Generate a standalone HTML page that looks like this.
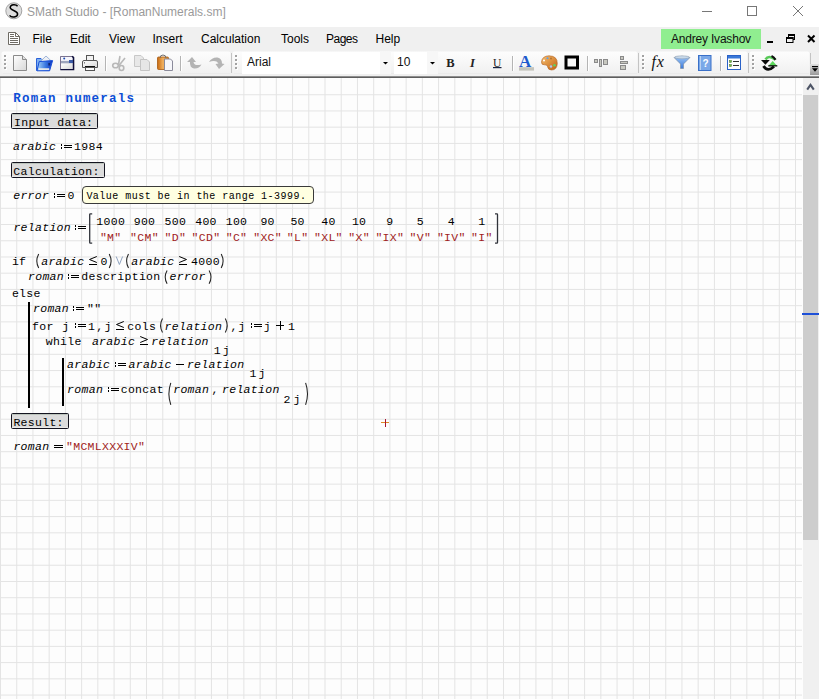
<!DOCTYPE html>
<html><head><meta charset="utf-8"><style>
html,body{margin:0;padding:0;width:819px;height:699px;overflow:hidden;background:#fff;}
body{position:relative;font-family:"Liberation Sans",sans-serif;}
.abs{position:absolute;}
#title{left:27px;top:5px;font-size:12px;color:#9A9A9A;white-space:nowrap;}
.mi_{position:absolute;top:32px;font-size:12px;color:#000;white-space:nowrap;}
svg text{font-family:"Liberation Mono",monospace;}
.m{font-size:11.5px;letter-spacing:0.3px;fill:#000;}
.mi{font-size:11.5px;letter-spacing:0.3px;font-style:italic;fill:#000;}
.title{font-size:12.5px;letter-spacing:1.2px;font-weight:bold;fill:#0C4ED6;}
.lbl{font-size:11.5px;letter-spacing:0.3px;fill:#000;}
.tip{font-size:10px;letter-spacing:0.47px;fill:#000;}
.str{font-size:11.5px;letter-spacing:0.3px;fill:#A01C22;}
.str2{font-size:11.5px;letter-spacing:0.3px;fill:#000;}
</style></head><body>
<div class="abs" style="left:0;top:0;width:819px;height:27px;background:#fff"></div>
<svg class="abs" style="left:0;top:0" width="819" height="27">
<circle cx="13.8" cy="10.8" r="8" fill="#DEDEDE" stroke="#9A9A9A" stroke-width="0.9"/>
<path d="M17.6 6.3 C16.2 4.3 10.6 4.0 10.2 7.4 C9.8 10.6 17.6 10.4 17.6 13.9 C17.6 17.6 11.2 17.8 9.6 15.4" fill="none" stroke="#000" stroke-width="1.5"/>
<rect x="702" y="11" width="10" height="1" fill="#777"/>
<rect x="747.5" y="6.5" width="9" height="9" fill="none" stroke="#777"/>
<path d="M793 6 L803 16 M803 6 L793 16" stroke="#777" stroke-width="1"/>
</svg>
<div class="abs" id="title">SMath Studio - [RomanNumerals.sm]</div>
<div class="abs" style="left:0;top:27px;width:819px;height:23px;background:#F0F0F0"></div>
<div class="mi_" style="left:32.5px">File</div>
<div class="mi_" style="left:70px">Edit</div>
<div class="mi_" style="left:109px">View</div>
<div class="mi_" style="left:152.5px">Insert</div>
<div class="mi_" style="left:201px">Calculation</div>
<div class="mi_" style="left:281px">Tools</div>
<div class="mi_" style="left:326px;letter-spacing:-0.5px">Pages</div>
<div class="mi_" style="left:375.5px">Help</div>
<svg class="abs" style="left:0;top:27px" width="819" height="23">
<path d="M8.5 5.5 H15.5 L19.5 9.5 V17.5 H8.5 Z" fill="#FFF" stroke="#6E6B64"/>
<path d="M15.5 5.5 V9.5 H19.5" fill="none" stroke="#6E6B64"/>
<rect x="10" y="7" width="4" height="1" fill="#6E6B64"/><rect x="10" y="9" width="4" height="1" fill="#6E6B64"/>
<rect x="10" y="11" width="8" height="1" fill="#6E6B64"/><rect x="10" y="13" width="8" height="1" fill="#6E6B64"/><rect x="10" y="15" width="8" height="1" fill="#6E6B64"/>
<rect x="767" y="14" width="6" height="2" fill="#000"/>
<rect x="788.5" y="7.5" width="6" height="5" fill="none" stroke="#000"/><rect x="788" y="7" width="7" height="2" fill="#000"/>
<rect x="786.5" y="10.5" width="6.5" height="5" fill="#F0F0F0" stroke="#000"/><rect x="786" y="10" width="7.5" height="2" fill="#000"/>
<path d="M808 8.5 L814.5 15 M814.5 8.5 L808 15" stroke="#000" stroke-width="2"/>
</svg>
<div class="abs" style="left:661px;top:29px;width:100px;height:20px;background:#90EE90;"></div>
<div class="abs" style="left:671px;top:32px;font-size:12px;color:#111;white-space:nowrap;letter-spacing:-0.2px">Andrey Ivashov</div>
<div class="abs" style="left:0;top:50px;width:819px;height:26px;background:#F0F0F0"></div>
<svg class="abs" style="left:0;top:0" width="819" height="78"><defs>
<linearGradient id="tbg" x1="0" y1="0" x2="0" y2="1"><stop offset="0" stop-color="#FDFDFD"/><stop offset="1" stop-color="#F1F1F1"/></linearGradient>
<linearGradient id="pg" x1="0" y1="0" x2="1" y2="1"><stop offset="0" stop-color="#FFFFFF"/><stop offset="1" stop-color="#D8D8D8"/></linearGradient>
<linearGradient id="fold" x1="0" y1="0" x2="0" y2="1"><stop offset="0" stop-color="#6FA8F0"/><stop offset="1" stop-color="#0A3FD0"/></linearGradient>
<linearGradient id="ovf" x1="0" y1="0" x2="0" y2="1"><stop offset="0" stop-color="#E0E0E0"/><stop offset="1" stop-color="#9A9A9A"/></linearGradient>
<linearGradient id="org" x1="0" y1="0" x2="1" y2="0"><stop offset="0" stop-color="#C86A10"/><stop offset=".5" stop-color="#F0B060"/><stop offset="1" stop-color="#D88020"/></linearGradient>
<linearGradient id="pal" x1="0" y1="0" x2="1" y2="1"><stop offset="0" stop-color="#F8C070"/><stop offset="1" stop-color="#C06010"/></linearGradient>
<linearGradient id="fun" x1="0" y1="0" x2="0" y2="1"><stop offset="0" stop-color="#A0C8F8"/><stop offset="1" stop-color="#3A78D8"/></linearGradient>
</defs>
<rect x="1.5" y="51.5" width="229" height="22" rx="2" fill="url(#tbg)"/>
<rect x="231" y="53" width="1" height="20" fill="#C4C4C4"/>
<rect x="3" y="73" width="227" height="1" fill="#EBEBEB"/>
<rect x="232.5" y="51.5" width="405" height="22" rx="2" fill="url(#tbg)"/>
<rect x="638" y="53" width="1" height="20" fill="#C4C4C4"/>
<rect x="234" y="73" width="403" height="1" fill="#EBEBEB"/>
<rect x="639.5" y="51.5" width="108" height="22" rx="2" fill="url(#tbg)"/>
<rect x="748" y="53" width="1" height="20" fill="#C4C4C4"/>
<rect x="641" y="73" width="106" height="1" fill="#EBEBEB"/>
<rect x="749.5" y="51.5" width="60" height="22" rx="2" fill="url(#tbg)"/>
<rect x="810" y="53" width="1" height="20" fill="#C4C4C4"/>
<rect x="751" y="73" width="58" height="1" fill="#EBEBEB"/>
<rect x="5" y="56" width="2" height="2" fill="#FFFFFF"/>
<rect x="4" y="55" width="2" height="2" fill="#A2A2A2"/>
<rect x="5" y="60" width="2" height="2" fill="#FFFFFF"/>
<rect x="4" y="59" width="2" height="2" fill="#A2A2A2"/>
<rect x="5" y="64" width="2" height="2" fill="#FFFFFF"/>
<rect x="4" y="63" width="2" height="2" fill="#A2A2A2"/>
<rect x="5" y="68" width="2" height="2" fill="#FFFFFF"/>
<rect x="4" y="67" width="2" height="2" fill="#A2A2A2"/>
<rect x="236" y="56" width="2" height="2" fill="#FFFFFF"/>
<rect x="235" y="55" width="2" height="2" fill="#A2A2A2"/>
<rect x="236" y="60" width="2" height="2" fill="#FFFFFF"/>
<rect x="235" y="59" width="2" height="2" fill="#A2A2A2"/>
<rect x="236" y="64" width="2" height="2" fill="#FFFFFF"/>
<rect x="235" y="63" width="2" height="2" fill="#A2A2A2"/>
<rect x="236" y="68" width="2" height="2" fill="#FFFFFF"/>
<rect x="235" y="67" width="2" height="2" fill="#A2A2A2"/>
<rect x="643" y="56" width="2" height="2" fill="#FFFFFF"/>
<rect x="642" y="55" width="2" height="2" fill="#A2A2A2"/>
<rect x="643" y="60" width="2" height="2" fill="#FFFFFF"/>
<rect x="642" y="59" width="2" height="2" fill="#A2A2A2"/>
<rect x="643" y="64" width="2" height="2" fill="#FFFFFF"/>
<rect x="642" y="63" width="2" height="2" fill="#A2A2A2"/>
<rect x="643" y="68" width="2" height="2" fill="#FFFFFF"/>
<rect x="642" y="67" width="2" height="2" fill="#A2A2A2"/>
<rect x="753" y="56" width="2" height="2" fill="#FFFFFF"/>
<rect x="752" y="55" width="2" height="2" fill="#A2A2A2"/>
<rect x="753" y="60" width="2" height="2" fill="#FFFFFF"/>
<rect x="752" y="59" width="2" height="2" fill="#A2A2A2"/>
<rect x="753" y="64" width="2" height="2" fill="#FFFFFF"/>
<rect x="752" y="63" width="2" height="2" fill="#A2A2A2"/>
<rect x="753" y="68" width="2" height="2" fill="#FFFFFF"/>
<rect x="752" y="67" width="2" height="2" fill="#A2A2A2"/>
<rect x="105" y="56" width="1" height="15" fill="#B4B4B4"/>
<rect x="106" y="56" width="1" height="15" fill="#FFFFFF"/>
<rect x="180" y="56" width="1" height="15" fill="#B4B4B4"/>
<rect x="181" y="56" width="1" height="15" fill="#FFFFFF"/>
<rect x="512" y="56" width="1" height="15" fill="#B4B4B4"/>
<rect x="513" y="56" width="1" height="15" fill="#FFFFFF"/>
<rect x="587" y="56" width="1" height="15" fill="#B4B4B4"/>
<rect x="588" y="56" width="1" height="15" fill="#FFFFFF"/>
<rect x="720" y="56" width="1" height="15" fill="#B4B4B4"/>
<rect x="721" y="56" width="1" height="15" fill="#FFFFFF"/>
<path d="M13.5 55.5 H22.5 L26.5 59.5 V70.5 H13.5 Z" fill="url(#pg)" stroke="#8A8A8A"/>
<path d="M22.5 55.5 V59.5 H26.5" fill="#E0E0E0" stroke="#8A8A8A"/>
<linearGradient id="fold2" x1="0" y1="0" x2="1" y2="0"><stop offset="0" stop-color="#A8D4FA"/><stop offset=".55" stop-color="#3A78E0"/><stop offset="1" stop-color="#0A30C0"/></linearGradient>
<path d="M36.5 70.5 V58.5 H41 L42 59.5 H44.5 L39.5 62 L37.8 70.5 Z" fill="#7EB0F0" stroke="#2A60D8" stroke-width="1"/>
<path d="M40 61.8 L46 56 L51.5 61.2 Z" fill="#EEF0F4" stroke="#8AA4D0" stroke-width=".8"/>
<path d="M37 70.8 L39.2 61.6 L52.6 60.6 L49.6 70.8 Z" fill="url(#fold2)" stroke="#1A50D8" stroke-width="1"/>
<rect x="38.6" y="68.3" width="10.6" height="1.6" fill="#F6F2EA"/>
<rect x="48.5" y="63" width="1.2" height="2.5" fill="#0A1A50"/>
<rect x="60" y="56" width="14" height="14" fill="#C4C4D0"/>
<rect x="61" y="57" width="11" height="3.8" fill="#F6F6FC"/>
<circle cx="64.2" cy="58.4" r="1" fill="#1F4DB0"/>
<rect x="61" y="61" width="12" height="2.2" fill="#9CA4BC"/>
<rect x="69" y="60" width="4" height="3" fill="#3A5AA8"/>
<rect x="61" y="63.5" width="11" height="5.8" fill="url(#pg)"/>
<path d="M60.5 69.5 V56.5 H72" fill="none" stroke="#7C7490" stroke-width="1"/>
<path d="M72 56.3 L73.6 57.6 V69.6 H60.4" fill="none" stroke="#0E0E3A" stroke-width="1.4"/>
<rect x="86.5" y="55.5" width="7" height="5" fill="#F2F2F2" stroke="#555"/>
<path d="M84 60.5 H96 Q97.5 60.5 97.5 62 V67.5 H82.5 V62 Q82.5 60.5 84 60.5 Z" fill="url(#pg)" stroke="#555"/>
<rect x="85" y="66" width="10" height="1.6" fill="#111"/>
<rect x="85.5" y="67.5" width="9" height="3" fill="#FAFAFA" stroke="#555"/>
<circle cx="84.5" cy="62.8" r=".6" fill="#333"/>
<g fill="none" stroke="#B8B8B8" stroke-width="1.6"><ellipse cx="115.5" cy="65.5" rx="2.8" ry="2.3"/><ellipse cx="121.5" cy="68" rx="2.3" ry="2.5"/><path d="M118.5 64.5 L120 56"/><path d="M119 65.5 L125 58"/></g>
<path d="M134.5 55.5 H141 L143.5 58 V66.5 H134.5 Z" fill="#E8E8E8" stroke="#C8C8C8"/>
<path d="M140.5 59.5 H147 L149.5 62 V70.5 H140.5 Z" fill="#E6E6E6" stroke="#C4C4C4"/>
<rect x="157.5" y="57" width="11" height="12.5" rx="1" fill="url(#org)" stroke="#A85A10" stroke-width=".8"/>
<path d="M160 58 Q160 55 163 55 Q166 55 166 58" fill="none" stroke="#707070" stroke-width="1"/>
<path d="M164.5 59 H170.5 L172.5 61 V70.5 H164.5 Z" fill="#F6F6FA" stroke="#8A8A9A"/>
<path d="M187 62 L192 57 L196 62 L193.5 62 Q194 66.5 201.5 64.5 Q199 69 194 68.5 Q189.5 67.5 190 62 Z" fill="#B4B4B4"/>
<path d="M224.5 64 L219 69 L215.5 64 L218.5 63.5 Q216 59.5 209 62 Q212 57 217.5 57.5 Q222 58.5 222 63.5 Z" fill="#B4B4B4"/>
<rect x="242" y="52" width="149" height="22" fill="#FFFFFF"/>
<rect x="380" y="52" width="11" height="22" fill="#F7F7F7"/>
<path d="M383 62 H388 L385.5 64.5 Z" fill="#000"/>
<rect x="394" y="52" width="44" height="22" fill="#FFFFFF"/>
<rect x="427" y="52" width="11" height="22" fill="#F7F7F7"/>
<path d="M430 62 H435 L432.5 64.5 Z" fill="#000"/>
<text x="247" y="65.7" style="font-family:'Liberation Sans';font-size:12px" fill="#111">Arial</text>
<text x="397" y="65.7" style="font-family:'Liberation Sans';font-size:12px" fill="#111">10</text>
<text x="446.2" y="67.3" style="font-family:'Liberation Serif';font-weight:bold;font-size:12.5px" fill="#222">B</text>
<text x="470" y="67.3" style="font-family:'Liberation Serif';font-style:italic;font-weight:bold;font-size:12.5px" fill="#222">I</text>
<text x="493" y="66.5" style="font-family:'Liberation Serif';font-size:11.5px" fill="#222">U</text>
<rect x="493" y="67" width="8.5" height="1.2" fill="#1A2440"/>
<text x="519" y="66.8" style="font-family:'Liberation Serif';font-weight:bold;font-size:17px" fill="#1E5ACD">A</text>
<rect x="519" y="67.2" width="15" height="3.4" fill="#C4C4BC"/>
<path d="M541.5 62 Q542 56 549 55.8 Q557.5 56 557.3 63.5 Q557 70 551.5 70 Q548 70 547.5 66.5 Q547 64.5 544.5 64.8 Q541.3 65 541.5 62 Z" fill="url(#pal)" stroke="#B06020" stroke-width=".6"/>
<circle cx="544" cy="60.5" r="1" fill="#FFF"/><circle cx="547.5" cy="58.2" r="1" fill="#5AA0F0"/><circle cx="551" cy="58.5" r=".9" fill="#B07030"/><circle cx="551" cy="66.5" r="1.2" fill="#A8C8F8"/><circle cx="554.5" cy="65.3" r="1.3" fill="#60D060"/>
<rect x="566" y="57" width="11.5" height="11" fill="#F8F8F8" stroke="#000" stroke-width="3"/>
<g fill="#C8C8C0" stroke="#8A8A8A" stroke-width="1"><rect x="594.5" y="59.5" width="3" height="3"/><rect x="599.5" y="59.5" width="2" height="7"/><rect x="603.5" y="59.5" width="4" height="5"/></g>
<g fill="#C8C8C0" stroke="#8A8A8A" stroke-width="1"><rect x="620.5" y="56.5" width="3" height="3"/><rect x="620.5" y="61.5" width="7" height="2"/><rect x="620.5" y="65.5" width="5" height="4"/></g>
<text x="651.5" y="67" style="font-family:'Liberation Serif';font-style:italic;font-size:16px;letter-spacing:0.8px" fill="#111">fx</text>
<path d="M674 57.5 Q682 55 690 57.5 L683.5 64 V68.5 H680.5 V64 Z" fill="url(#fun)" stroke="#7A8A9A" stroke-width=".6"/>
<ellipse cx="682" cy="57.3" rx="7.5" ry="1.5" fill="#C8D8E8" stroke="#8A9AAA" stroke-width=".5"/>
<rect x="698.5" y="55.5" width="12.5" height="15" fill="#7AA8E8" stroke="#3A70C8"/>
<rect x="700" y="56" width="1" height="14" fill="#B8D0F0"/>
<text x="702.5" y="67" style="font-family:'Liberation Sans';font-weight:bold;font-size:10px" fill="#FFF">?</text>
<rect x="727.5" y="55.5" width="13" height="14" fill="#FFFFFF" stroke="#2A62C8"/>
<rect x="728" y="56" width="12" height="2.5" fill="#3A78D8"/>
<rect x="729.5" y="60.5" width="2" height="2" fill="#70C040" stroke="#507030" stroke-width=".5"/>
<rect x="729.5" y="64.5" width="2" height="2" fill="#70C040" stroke="#507030" stroke-width=".5"/>
<rect x="733" y="61" width="6" height="1" fill="#333"/><rect x="733" y="65" width="6" height="1" fill="#333"/>
<path d="M765.5 59.5 Q768.5 54.5 775.5 59.8" fill="none" stroke="#58C858" stroke-width="2.6"/>
<path d="M771.5 56 Q774 57 775.5 59.8" fill="none" stroke="#111" stroke-width="2.2"/>
<path d="M761 60 H769.8 L765.4 64.8 Z" fill="#0A0A0A"/>
<path d="M763.5 66 Q767.5 72.5 774 66.5" fill="none" stroke="#0A0A0A" stroke-width="2.8"/>
<path d="M768.3 66 H777.2 L772.7 61 Z" fill="#5CD85C"/>
<rect x="768.3" y="65.2" width="9" height="1.3" fill="#0A0A0A"/>
<rect x="810" y="64" width="9" height="11" fill="url(#ovf)"/>
<rect x="812" y="66" width="6" height="1.2" fill="#000"/>
<path d="M812 68.2 H818 L815 71.8 Z" fill="#000"/></svg>
<div class="abs" style="left:0;top:76px;width:819px;height:1px;background:#8E8E8E"></div><div class="abs" style="left:0;top:77px;width:819px;height:1px;background:#5E5E5E"></div>
<svg class="abs" style="left:0;top:0" width="819" height="699">
<rect x="0" y="78" width="803" height="621" fill="#FDFDFD"/>
<rect x="0.0" y="78" width="1" height="621" fill="#E4E4E4"/>
<rect x="16.225" y="78" width="1" height="621" fill="#E4E4E4"/>
<rect x="32.45" y="78" width="1" height="621" fill="#E4E4E4"/>
<rect x="48.675" y="78" width="1" height="621" fill="#E4E4E4"/>
<rect x="64.9" y="78" width="1" height="621" fill="#E4E4E4"/>
<rect x="81.125" y="78" width="1" height="621" fill="#E4E4E4"/>
<rect x="97.35" y="78" width="1" height="621" fill="#E4E4E4"/>
<rect x="113.575" y="78" width="1" height="621" fill="#E4E4E4"/>
<rect x="129.8" y="78" width="1" height="621" fill="#E4E4E4"/>
<rect x="146.025" y="78" width="1" height="621" fill="#E4E4E4"/>
<rect x="162.25" y="78" width="1" height="621" fill="#E4E4E4"/>
<rect x="178.475" y="78" width="1" height="621" fill="#E4E4E4"/>
<rect x="194.7" y="78" width="1" height="621" fill="#E4E4E4"/>
<rect x="210.925" y="78" width="1" height="621" fill="#E4E4E4"/>
<rect x="227.15" y="78" width="1" height="621" fill="#E4E4E4"/>
<rect x="243.375" y="78" width="1" height="621" fill="#E4E4E4"/>
<rect x="259.6" y="78" width="1" height="621" fill="#E4E4E4"/>
<rect x="275.825" y="78" width="1" height="621" fill="#E4E4E4"/>
<rect x="292.05" y="78" width="1" height="621" fill="#E4E4E4"/>
<rect x="308.275" y="78" width="1" height="621" fill="#E4E4E4"/>
<rect x="324.5" y="78" width="1" height="621" fill="#E4E4E4"/>
<rect x="340.725" y="78" width="1" height="621" fill="#E4E4E4"/>
<rect x="356.95" y="78" width="1" height="621" fill="#E4E4E4"/>
<rect x="373.175" y="78" width="1" height="621" fill="#E4E4E4"/>
<rect x="389.4" y="78" width="1" height="621" fill="#E4E4E4"/>
<rect x="405.625" y="78" width="1" height="621" fill="#E4E4E4"/>
<rect x="421.85" y="78" width="1" height="621" fill="#E4E4E4"/>
<rect x="438.075" y="78" width="1" height="621" fill="#E4E4E4"/>
<rect x="454.3" y="78" width="1" height="621" fill="#E4E4E4"/>
<rect x="470.525" y="78" width="1" height="621" fill="#E4E4E4"/>
<rect x="486.75" y="78" width="1" height="621" fill="#E4E4E4"/>
<rect x="502.975" y="78" width="1" height="621" fill="#E4E4E4"/>
<rect x="519.2" y="78" width="1" height="621" fill="#E4E4E4"/>
<rect x="535.425" y="78" width="1" height="621" fill="#E4E4E4"/>
<rect x="551.65" y="78" width="1" height="621" fill="#E4E4E4"/>
<rect x="567.875" y="78" width="1" height="621" fill="#E4E4E4"/>
<rect x="584.1" y="78" width="1" height="621" fill="#E4E4E4"/>
<rect x="600.325" y="78" width="1" height="621" fill="#E4E4E4"/>
<rect x="616.55" y="78" width="1" height="621" fill="#E4E4E4"/>
<rect x="632.775" y="78" width="1" height="621" fill="#E4E4E4"/>
<rect x="649.0" y="78" width="1" height="621" fill="#E4E4E4"/>
<rect x="665.225" y="78" width="1" height="621" fill="#E4E4E4"/>
<rect x="681.45" y="78" width="1" height="621" fill="#E4E4E4"/>
<rect x="697.675" y="78" width="1" height="621" fill="#E4E4E4"/>
<rect x="713.9" y="78" width="1" height="621" fill="#E4E4E4"/>
<rect x="730.125" y="78" width="1" height="621" fill="#E4E4E4"/>
<rect x="746.35" y="78" width="1" height="621" fill="#E4E4E4"/>
<rect x="762.575" y="78" width="1" height="621" fill="#E4E4E4"/>
<rect x="778.8" y="78" width="1" height="621" fill="#E4E4E4"/>
<rect x="795.025" y="78" width="1" height="621" fill="#E4E4E4"/>
<rect x="0" y="94.225" width="802" height="1" fill="#E4E4E4"/>
<rect x="0" y="110.45" width="802" height="1" fill="#E4E4E4"/>
<rect x="0" y="126.675" width="802" height="1" fill="#E4E4E4"/>
<rect x="0" y="142.9" width="802" height="1" fill="#E4E4E4"/>
<rect x="0" y="159.125" width="802" height="1" fill="#E4E4E4"/>
<rect x="0" y="175.35" width="802" height="1" fill="#E4E4E4"/>
<rect x="0" y="191.575" width="802" height="1" fill="#E4E4E4"/>
<rect x="0" y="207.8" width="802" height="1" fill="#E4E4E4"/>
<rect x="0" y="224.025" width="802" height="1" fill="#E4E4E4"/>
<rect x="0" y="240.25" width="802" height="1" fill="#E4E4E4"/>
<rect x="0" y="256.475" width="802" height="1" fill="#E4E4E4"/>
<rect x="0" y="272.7" width="802" height="1" fill="#E4E4E4"/>
<rect x="0" y="288.925" width="802" height="1" fill="#E4E4E4"/>
<rect x="0" y="305.15" width="802" height="1" fill="#E4E4E4"/>
<rect x="0" y="321.375" width="802" height="1" fill="#E4E4E4"/>
<rect x="0" y="337.6" width="802" height="1" fill="#E4E4E4"/>
<rect x="0" y="353.825" width="802" height="1" fill="#E4E4E4"/>
<rect x="0" y="370.05" width="802" height="1" fill="#E4E4E4"/>
<rect x="0" y="386.275" width="802" height="1" fill="#E4E4E4"/>
<rect x="0" y="402.5" width="802" height="1" fill="#E4E4E4"/>
<rect x="0" y="418.725" width="802" height="1" fill="#E4E4E4"/>
<rect x="0" y="434.95" width="802" height="1" fill="#E4E4E4"/>
<rect x="0" y="451.175" width="802" height="1" fill="#E4E4E4"/>
<rect x="0" y="467.4" width="802" height="1" fill="#E4E4E4"/>
<rect x="0" y="483.625" width="802" height="1" fill="#E4E4E4"/>
<rect x="0" y="499.85" width="802" height="1" fill="#E4E4E4"/>
<rect x="0" y="516.075" width="802" height="1" fill="#E4E4E4"/>
<rect x="0" y="532.3" width="802" height="1" fill="#E4E4E4"/>
<rect x="0" y="548.525" width="802" height="1" fill="#E4E4E4"/>
<rect x="0" y="564.75" width="802" height="1" fill="#E4E4E4"/>
<rect x="0" y="580.975" width="802" height="1" fill="#E4E4E4"/>
<rect x="0" y="597.2" width="802" height="1" fill="#E4E4E4"/>
<rect x="0" y="613.425" width="802" height="1" fill="#E4E4E4"/>
<rect x="0" y="629.65" width="802" height="1" fill="#E4E4E4"/>
<rect x="0" y="645.875" width="802" height="1" fill="#E4E4E4"/>
<rect x="0" y="662.1" width="802" height="1" fill="#E4E4E4"/>
<rect x="0" y="678.325" width="802" height="1" fill="#E4E4E4"/>
<rect x="0" y="694.55" width="802" height="1" fill="#E4E4E4"/>
<rect x="803" y="78" width="16" height="621" fill="#F0F0F0"/>
<rect x="803" y="95" width="15" height="445" fill="#CDCDCD"/>
<rect x="802" y="313" width="17" height="2" fill="#1E50D8"/>
<path d="M807.2 89.6 L810.5 84.8 L813.8 89.6" fill="none" stroke="#4E5566" stroke-width="2.1"/>
<text x="13.3" y="101.6" class="title" >Roman numerals</text>
<rect x="11.5" y="113.5" width="86" height="15" rx="1" fill="#DCDCDC" stroke="#141420" stroke-width="1"/>
<rect x="12" y="114" width="85" height="1" fill="#BCC4BC"/>
<rect x="12" y="127" width="85" height="1" fill="#E8E8E8"/>
<text x="14.1" y="126" class="lbl" >Input data:</text>
<text x="13.1" y="150" class="mi" >arabic</text>
<rect x="61" y="144" width="1" height="2" fill="#000"/>
<rect x="61" y="147" width="1" height="2" fill="#000"/>
<rect x="64" y="145" width="8" height="1" fill="#000"/>
<rect x="64" y="147" width="8" height="1" fill="#000"/>
<text x="74.1" y="150" class="m" >1984</text>
<rect x="11.5" y="162.5" width="93" height="15" rx="1" fill="#DCDCDC" stroke="#141420" stroke-width="1"/>
<rect x="12" y="163" width="92" height="1" fill="#BCC4BC"/>
<rect x="12" y="176" width="92" height="1" fill="#E8E8E8"/>
<text x="13.299999999999999" y="175" class="lbl" >Calculation:</text>
<text x="13.2" y="199" class="mi" >error</text>
<rect x="54" y="193" width="1" height="2" fill="#000"/>
<rect x="54" y="196" width="1" height="2" fill="#000"/>
<rect x="57" y="194" width="8" height="1" fill="#000"/>
<rect x="57" y="196" width="8" height="1" fill="#000"/>
<text x="67.5" y="199" class="m" >0</text>
<rect x="82.5" y="186.5" width="231" height="17" rx="3.5" fill="#FFFFE1" stroke="#3A3A3A" stroke-width="1"/>
<text x="86.4" y="198.8" class="tip" >Value must be in the range 1-3999.</text>
<text x="13.4" y="231.4" class="mi" >relation</text>
<rect x="75" y="225" width="1" height="2" fill="#000"/>
<rect x="75" y="228" width="1" height="2" fill="#000"/>
<rect x="78" y="226" width="8" height="1" fill="#000"/>
<rect x="78" y="228" width="8" height="1" fill="#000"/>
<path d="M92.2 213.8 H90.3 Q89.7 213.8 89.7 214.5 V242.5 Q89.7 243.2 90.3 243.2 H92.2" fill="none" stroke="#30333A" stroke-width="1.3"/>
<path d="M495 213.8 H496.9 Q497.5 213.8 497.5 214.5 V242.5 Q497.5 243.2 496.9 243.2 H495" fill="none" stroke="#30333A" stroke-width="1.3"/>
<text x="110.7" y="224.8" class="m" text-anchor="middle">1000</text>
<text x="110.7" y="241.4" class="str" text-anchor="middle">&quot;M&quot;</text>
<text x="144.5" y="224.8" class="m" text-anchor="middle">900</text>
<text x="144.5" y="241.4" class="str" text-anchor="middle">&quot;CM&quot;</text>
<text x="175.4" y="224.8" class="m" text-anchor="middle">500</text>
<text x="175.4" y="241.4" class="str" text-anchor="middle">&quot;D&quot;</text>
<text x="206.0" y="224.8" class="m" text-anchor="middle">400</text>
<text x="206.0" y="241.4" class="str" text-anchor="middle">&quot;CD&quot;</text>
<text x="236.5" y="224.8" class="m" text-anchor="middle">100</text>
<text x="236.5" y="241.4" class="str" text-anchor="middle">&quot;C&quot;</text>
<text x="267.6" y="224.8" class="m" text-anchor="middle">90</text>
<text x="267.6" y="241.4" class="str" text-anchor="middle">&quot;XC&quot;</text>
<text x="297.6" y="224.8" class="m" text-anchor="middle">50</text>
<text x="297.6" y="241.4" class="str" text-anchor="middle">&quot;L&quot;</text>
<text x="328.40000000000003" y="224.8" class="m" text-anchor="middle">40</text>
<text x="328.40000000000003" y="241.4" class="str" text-anchor="middle">&quot;XL&quot;</text>
<text x="359.1" y="224.8" class="m" text-anchor="middle">10</text>
<text x="359.1" y="241.4" class="str" text-anchor="middle">&quot;X&quot;</text>
<text x="389.8" y="224.8" class="m" text-anchor="middle">9</text>
<text x="389.8" y="241.4" class="str" text-anchor="middle">&quot;IX&quot;</text>
<text x="420.40000000000003" y="224.8" class="m" text-anchor="middle">5</text>
<text x="420.40000000000003" y="241.4" class="str" text-anchor="middle">&quot;V&quot;</text>
<text x="451.3" y="224.8" class="m" text-anchor="middle">4</text>
<text x="451.3" y="241.4" class="str" text-anchor="middle">&quot;IV&quot;</text>
<text x="481.8" y="224.8" class="m" text-anchor="middle">1</text>
<text x="481.8" y="241.4" class="str" text-anchor="middle">&quot;I&quot;</text>
<text x="11.9" y="265" class="m" >if</text>
<path d="M38.699999999999996 254 Q34.9 261.0 38.699999999999996 268" fill="none" stroke="#222" stroke-width="1.05"/>
<text x="41.2" y="265" class="mi" >arabic</text>
<path d="M96.8 256.5 L89.5 259.5 L96.8 262.5" fill="none" stroke="#000" stroke-width="1"/>
<rect x="89" y="264" width="8" height="1" fill="#000"/>
<text x="100.39999999999999" y="265" class="m" >0</text>
<path d="M109.2 254 Q113.0 261.0 109.2 268" fill="none" stroke="#222" stroke-width="1.05"/>
<path d="M116.2 256.5 L119.4 264.5 L122.60000000000001 256.5" fill="none" stroke="#90A4C0" stroke-width="1"/>
<path d="M128.5 254 Q124.69999999999999 261.0 128.5 268" fill="none" stroke="#222" stroke-width="1.05"/>
<text x="131.29999999999998" y="265" class="mi" >arabic</text>
<path d="M179.2 256.5 L186.5 259.5 L179.2 262.5" fill="none" stroke="#000" stroke-width="1"/>
<rect x="179" y="264" width="8" height="1" fill="#000"/>
<text x="191.1" y="265" class="m" >4000</text>
<path d="M221.20000000000002 254 Q225.0 261.0 221.20000000000002 268" fill="none" stroke="#222" stroke-width="1.05"/>
<text x="28.0" y="280.3" class="mi" >roman</text>
<rect x="68" y="274" width="1" height="2" fill="#000"/>
<rect x="68" y="277" width="1" height="2" fill="#000"/>
<rect x="71" y="275" width="8" height="1" fill="#000"/>
<rect x="71" y="277" width="8" height="1" fill="#000"/>
<text x="81.3" y="280.3" class="m" >description</text>
<path d="M167.1 270.6 Q163.29999999999998 277.20000000000005 167.1 283.8" fill="none" stroke="#222" stroke-width="1.05"/>
<text x="169.6" y="280.3" class="mi" >error</text>
<path d="M209.10000000000002 270.6 Q212.9 277.20000000000005 209.10000000000002 283.8" fill="none" stroke="#222" stroke-width="1.05"/>
<text x="11.9" y="297.2" class="m" >else</text>
<rect x="28" y="302" width="2" height="106" fill="#000"/>
<text x="33.0" y="312" class="mi" >roman</text>
<rect x="73" y="306" width="1" height="2" fill="#000"/>
<rect x="73" y="309" width="1" height="2" fill="#000"/>
<rect x="76" y="307" width="8" height="1" fill="#000"/>
<rect x="76" y="309" width="8" height="1" fill="#000"/>
<text x="87.0" y="312" class="str2" >&quot;&quot;</text>
<text x="32.1" y="330" class="m" >for</text>
<text x="62.300000000000004" y="330" class="m" >j</text>
<rect x="75" y="323" width="1" height="2" fill="#000"/>
<rect x="75" y="326" width="1" height="2" fill="#000"/>
<rect x="78" y="324" width="8" height="1" fill="#000"/>
<rect x="78" y="326" width="8" height="1" fill="#000"/>
<text x="87.89999999999999" y="330" class="m" >1</text>
<text x="96.19999999999999" y="330" class="m" >,</text>
<text x="104.39999999999999" y="330" class="m" >j</text>
<path d="M123.8 321.5 L116.5 324.5 L123.8 327.5" fill="none" stroke="#000" stroke-width="1"/>
<rect x="116" y="329" width="8" height="1" fill="#000"/>
<text x="127.3" y="330" class="m" >cols</text>
<path d="M162.5 318.5 Q158.7 325.5 162.5 332.5" fill="none" stroke="#222" stroke-width="1.05"/>
<text x="164.6" y="330" class="mi" >relation</text>
<path d="M225.3 318.5 Q229.1 325.5 225.3 332.5" fill="none" stroke="#222" stroke-width="1.05"/>
<text x="230.6" y="330" class="m" >,</text>
<text x="238.29999999999998" y="330" class="m" >j</text>
<rect x="251" y="323" width="1" height="2" fill="#000"/>
<rect x="251" y="326" width="1" height="2" fill="#000"/>
<rect x="254" y="324" width="8" height="1" fill="#000"/>
<rect x="254" y="326" width="8" height="1" fill="#000"/>
<text x="263.8" y="330" class="m" >j</text>
<rect x="280" y="321" width="1" height="9" fill="#000"/>
<rect x="276" y="325" width="8" height="1" fill="#000"/>
<text x="288.1" y="330" class="m" >1</text>
<text x="45.7" y="344.8" class="m" >while</text>
<text x="91.89999999999999" y="344.8" class="mi" >arabic</text>
<path d="M140.2 336.5 L147.5 339.5 L140.2 342.5" fill="none" stroke="#000" stroke-width="1"/>
<rect x="140" y="344" width="8" height="1" fill="#000"/>
<text x="151.2" y="344.8" class="mi" >relation</text>
<text x="213.7" y="354" class="m" >1</text>
<text x="222.7" y="354" class="m" >j</text>
<rect x="62" y="358" width="2" height="48" fill="#000"/>
<text x="67.1" y="367.6" class="mi" >arabic</text>
<rect x="115" y="362" width="1" height="2" fill="#000"/>
<rect x="115" y="365" width="1" height="2" fill="#000"/>
<rect x="118" y="363" width="8" height="1" fill="#000"/>
<rect x="118" y="365" width="8" height="1" fill="#000"/>
<text x="128.6" y="367.6" class="mi" >arabic</text>
<rect x="176" y="364" width="8" height="1" fill="#000"/>
<text x="186.9" y="367.6" class="mi" >relation</text>
<text x="249.4" y="377" class="m" >1</text>
<text x="258.40000000000003" y="377" class="m" >j</text>
<text x="67.1" y="392.8" class="mi" >roman</text>
<rect x="108" y="387" width="1" height="2" fill="#000"/>
<rect x="108" y="390" width="1" height="2" fill="#000"/>
<rect x="111" y="388" width="8" height="1" fill="#000"/>
<rect x="111" y="390" width="8" height="1" fill="#000"/>
<text x="120.69999999999999" y="392.8" class="m" >concat</text>
<path d="M170.8 382.9 Q167.0 393.85 170.8 404.8" fill="none" stroke="#222" stroke-width="1.05"/>
<text x="173.2" y="392.8" class="mi" >roman</text>
<text x="211.6" y="392.8" class="m" >,</text>
<text x="222.0" y="392.8" class="mi" >relation</text>
<text x="283.6" y="402.8" class="m" >2</text>
<text x="293.40000000000003" y="402.8" class="m" >j</text>
<path d="M305.6 382.9 Q309.40000000000003 393.85 305.6 404.8" fill="none" stroke="#222" stroke-width="1.05"/>
<rect x="11.5" y="413.5" width="57" height="15" rx="1" fill="#DCDCDC" stroke="#141420" stroke-width="1"/>
<rect x="12" y="414" width="56" height="1" fill="#BCC4BC"/>
<rect x="12" y="427" width="56" height="1" fill="#E8E8E8"/>
<text x="13.4" y="425.8" class="lbl" >Result:</text>
<text x="13.4" y="450" class="mi" >roman</text>
<rect x="54" y="445" width="9" height="1" fill="#000"/>
<rect x="54" y="447" width="9" height="1" fill="#000"/>
<text x="66.0" y="450" class="str" >&quot;MCMLXXXIV&quot;</text>
<rect x="381" y="422" width="8" height="1" fill="#E08A28"/>
<rect x="385" y="419" width="1" height="8" fill="#A81830"/>
</svg>
</body></html>
